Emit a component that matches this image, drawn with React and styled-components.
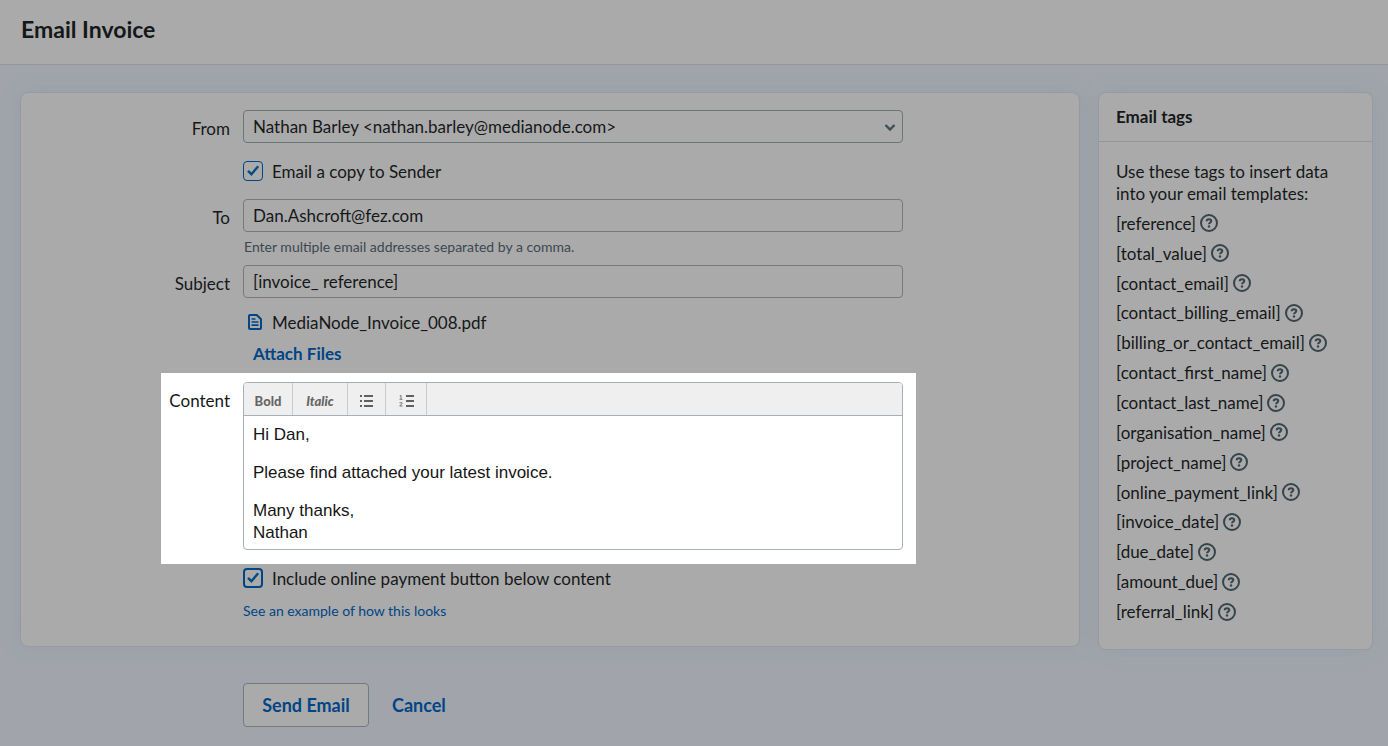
import React from 'react'
import styled, { createGlobalStyle } from 'styled-components'

const GlobalStyle = createGlobalStyle`
  * {
    box-sizing: border-box;
  }

  body {
    margin: 0;
    background: #a1a5ab;
    color: #151819;
    font-family: Lato, "Liberation Sans", sans-serif;
    font-size: 17px;
    line-height: 22px;
  }

  button, input, select {
    font: inherit;
    color: inherit;
  }
`

const Header = styled.header`
  height: 65px;
  padding: 16px 21px;
  background: #aaaaaa;
  border-bottom: 1px solid #92979c;
`

const Title = styled.h1`
  margin: 0;
  font-size: 23px;
  line-height: 26px;
  font-weight: 700;
`

const Main = styled.main`
  display: grid;
  grid-template-columns: minmax(0, 1fr) 275px;
  gap: 33px 18px;
  align-items: start;
  padding: 27px 15px 20px 20px;
`

const Card = styled.section`
  background: #aaaaaa;
  border: 1px solid #979b9f;
  border-radius: 8px;
  box-shadow: 0 0 20px rgba(125, 135, 165, 0.22);
`

const FormCard = styled(Card)`
  padding: 17px 0 24px;
`

const Row = styled.div`
  display: grid;
  grid-template-columns: 209px minmax(0, 660px);
  column-gap: 13px;
  padding-right: 13px;
`

const Label = styled.label`
  padding-top: 8px;
  text-align: right;
`

const Field = styled.div`
  grid-column: 2;
  position: relative;
`

const TextInput = styled.input`
  display: block;
  width: 100%;
  height: 33px;
  padding: 0 9px;
  background: transparent;
  border: 1px solid #757a7d;
  border-radius: 4px;
`

const Select = styled.select`
  display: block;
  width: 100%;
  height: 33px;
  padding: 0 30px 0 9px;
  appearance: none;
  background: transparent;
  border: 1px solid #6d7579;
  border-radius: 4px;
`

const Chevron = styled.svg`
  position: absolute;
  top: 13px;
  right: 7px;
  pointer-events: none;
`

const CheckLabel = styled.label`
  display: flex;
  align-items: flex-start;
  gap: 9px;
  height: 20px;
  margin: ${(p) => p.$margin};
`

const CheckBox = styled.span`
  position: relative;
  display: flex;
  width: 20px;
  height: 20px;

  input {
    width: 20px;
    height: 20px;
    margin: 0;
    appearance: none;
    border: ${(p) => (p.$strong ? 2 : 1)}px solid #004586;
    border-radius: 4px;
  }

  svg {
    position: absolute;
    inset: 0;
    pointer-events: none;
  }
`

const Hint = styled.p`
  height: 33px;
  margin: 0;
  padding: 4px 0 0 1px;
  color: #3b484f;
  font-size: 14px;
`

const FileRow = styled.div`
  display: flex;
  align-items: center;
  gap: 9px;
  margin-top: 14px;
  padding-left: 4px;
`

const AttachButton = styled.button`
  display: block;
  margin: 9px 0 8px;
  padding: 0 10px;
  border: 0;
  background: none;
  color: #004586;
  font-weight: 700;
`

const Spotlight = styled.div`
  display: grid;
  grid-template-columns: 69px minmax(0, 660px);
  column-gap: 13px;
  max-width: 755px;
  margin-left: 140px;
  padding: 9px 13px 14px 0;
  background: #ffffff;
`

const Editor = styled.div`
  border: 1px solid #a7b0b5;
  border-radius: 4px;
  overflow: hidden;
`

const Toolbar = styled.div`
  display: flex;
  height: 33px;
  background: #efefef;
  border-bottom: 1px solid #a7b0b5;
`

const ToolButton = styled.button`
  display: flex;
  align-items: center;
  justify-content: center;
  width: ${(p) => p.$width}px;
  padding: 3px 0 0;
  border: 0;
  border-right: 1px solid #c8cbcd;
  background: none;
  color: #666666;
  font-size: 13px;
  font-weight: 900;
  font-style: ${(p) => (p.$italic ? 'italic' : 'normal')};
`

const Message = styled.div`
  min-height: 133px;
  padding: 8px 9px 5px;
  color: #151515;
  font-family: "Liberation Sans", Arial, sans-serif;
  outline: none;

  p {
    margin: 0 0 16px;
  }

  p:last-child {
    margin: 0;
  }
`

const ExampleLink = styled.a`
  display: block;
  color: #004586;
  font-size: 14px;
  text-decoration: none;
`

const Actions = styled.div`
  grid-column: 1;
  display: flex;
  align-items: center;
  gap: 23px;
  padding-left: 223px;
`

const SendButton = styled.button`
  width: 126px;
  height: 44px;
  padding: 0;
  background: #aaaaaa;
  border: 1px solid #737a7f;
  border-radius: 4px;
  color: #004586;
  font-size: 18px;
  font-weight: 700;
`

const CancelLink = styled.a`
  color: #004586;
  font-size: 18px;
  font-weight: 700;
  text-decoration: none;
`

const TagsTitle = styled.h2`
  margin: 0;
  padding: 13px 17px;
  border-bottom: 1px solid #929799;
  font-size: 17px;
  line-height: 22px;
  font-weight: 700;
`

const TagsBody = styled.div`
  padding: 19px 17px 22px;

  p {
    margin: 0 0 4px;
  }
`

const TagList = styled.ul`
  display: grid;
  grid-auto-rows: 1fr;
  height: 418px;
  margin: 0;
  padding: 0;
  list-style: none;
`

const Tag = styled.li`
  display: flex;
  align-items: center;
  gap: 4px;
`

const HelpButton = styled.button`
  display: flex;
  padding: 0 0 1px;
  border: 0;
  background: none;
`

const tags = [
  'reference',
  'total_value',
  'contact_email',
  'contact_billing_email',
  'billing_or_contact_email',
  'contact_first_name',
  'contact_last_name',
  'organisation_name',
  'project_name',
  'online_payment_link',
  'invoice_date',
  'due_date',
  'amount_due',
  'referral_link',
]

const HelpIcon = () => (
  <svg width="18" height="18" viewBox="0 0 18 18" fill="none" stroke="#36444b">
    <circle cx="9" cy="9" r="8" strokeWidth="2" />
    <path d="M6.7 7.2C6.7 5.9 7.6 5.2 9 5.2s2.3.8 2.3 1.9c0 1.5-2.3 1.5-2.3 3.1" strokeWidth="2" />
    <circle cx="9" cy="12.5" r="1.2" fill="#36444b" stroke="none" />
  </svg>
)

const FileIcon = () => (
  <svg width="16" height="20" viewBox="0 0 16 20" fill="none" stroke="#004586" strokeWidth="2">
    <path d="M2.5 2h7.3l4.2 4.2V15a1 1 0 0 1-1 1H3a1 1 0 0 1-1-1V3a1 1 0 0 1 .5-1z" strokeLinejoin="round" />
    <path d="M4.5 6h4M4.5 9h7M4.5 12.2h7" strokeWidth="1.7" />
  </svg>
)

const BulletIcon = () => (
  <svg width="13" height="12" viewBox="0 0 13 12" fill="#606060">
    <path d="M0 0h2v2H0zM0 5h2v2H0zM0 10h2v2H0zM4 0h9v2H4zM4 5h9v2H4zM4 10h9v2H4z" />
  </svg>
)

const NumberIcon = () => (
  <svg width="15" height="12" viewBox="0 0 15 12" fill="#606060">
    <path d="M7 0h8v2H7zM7 5h8v2H7zM7 10h8v2H7z" />
    <path d="M.7 1l1.3-.6v3.7M.5 4.3h3M.5 7.8h2.6v.8L.7 11h2.8" fill="none" stroke="#777777" strokeWidth="1" />
  </svg>
)

const Check = ({ id, label, strong, margin }) => (
  <CheckLabel htmlFor={id} $margin={margin}>
    <CheckBox $strong={strong}>
      <input id={id} type="checkbox" defaultChecked />
      <svg width="20" height="20" viewBox="0 0 20 20" fill="none" stroke="#004d86" strokeWidth="2.4">
        <path d="M5 9.8l3.4 3.4L15.2 5.2" />
      </svg>
    </CheckBox>
    {label}
  </CheckLabel>
)

export default function App() {
  return (
    <>
      <GlobalStyle />
      <Header>
        <Title>Email Invoice</Title>
      </Header>
      <Main>
        <FormCard>
          <Row>
            <Label htmlFor="from">From</Label>
            <Field>
              <Select id="from">
                <option>Nathan Barley &lt;nathan.barley@medianode.com&gt;</option>
              </Select>
              <Chevron width="12" height="9" viewBox="0 0 12 9" fill="none" stroke="#414e55" strokeWidth="2.4">
                <path d="M1.5 2L6 6.5 10.5 2" />
              </Chevron>
            </Field>
          </Row>
          <Row>
            <Field>
              <Check id="copy" label="Email a copy to Sender" margin="18px 0" />
            </Field>
          </Row>
          <Row>
            <Label htmlFor="to">To</Label>
            <Field>
              <TextInput id="to" type="text" defaultValue="Dan.Ashcroft@fez.com" />
              <Hint>Enter multiple email addresses separated by a comma.</Hint>
            </Field>
          </Row>
          <Row>
            <Label htmlFor="subject">Subject</Label>
            <Field>
              <TextInput id="subject" type="text" defaultValue="[invoice_ reference]" />
              <FileRow>
                <FileIcon />
                MediaNode_Invoice_008.pdf
              </FileRow>
              <AttachButton type="button">Attach Files</AttachButton>
            </Field>
          </Row>
          <Spotlight>
            <Label as="div" id="content-label">Content</Label>
            <Editor>
              <Toolbar>
                <ToolButton type="button" $width={49}>Bold</ToolButton>
                <ToolButton type="button" $width={55} $italic>Italic</ToolButton>
                <ToolButton type="button" $width={38} aria-label="Bulleted list"><BulletIcon /></ToolButton>
                <ToolButton type="button" $width={41} aria-label="Numbered list"><NumberIcon /></ToolButton>
              </Toolbar>
              <Message
                contentEditable
                suppressContentEditableWarning
                role="textbox"
                aria-multiline="true"
                aria-labelledby="content-label"
              >
                <p>Hi Dan,</p>
                <p>Please find attached your latest invoice.</p>
                <p>Many thanks,<br />Nathan</p>
              </Message>
            </Editor>
          </Spotlight>
          <Row>
            <Field>
              <Check id="payment" label="Include online payment button below content" strong margin="4px 0 12px" />
              <ExampleLink href="#example">See an example of how this looks</ExampleLink>
            </Field>
          </Row>
        </FormCard>
        <Card as="aside">
          <TagsTitle>Email tags</TagsTitle>
          <TagsBody>
            <p>Use these tags to insert data into your email templates:</p>
            <TagList>
              {tags.map((tag) => (
                <Tag key={tag}>
                  [{tag}]
                  <HelpButton type="button" aria-label={`About ${tag}`}>
                    <HelpIcon />
                  </HelpButton>
                </Tag>
              ))}
            </TagList>
          </TagsBody>
        </Card>
        <Actions>
          <SendButton type="submit">Send Email</SendButton>
          <CancelLink href="#cancel">Cancel</CancelLink>
        </Actions>
      </Main>
    </>
  )
}
